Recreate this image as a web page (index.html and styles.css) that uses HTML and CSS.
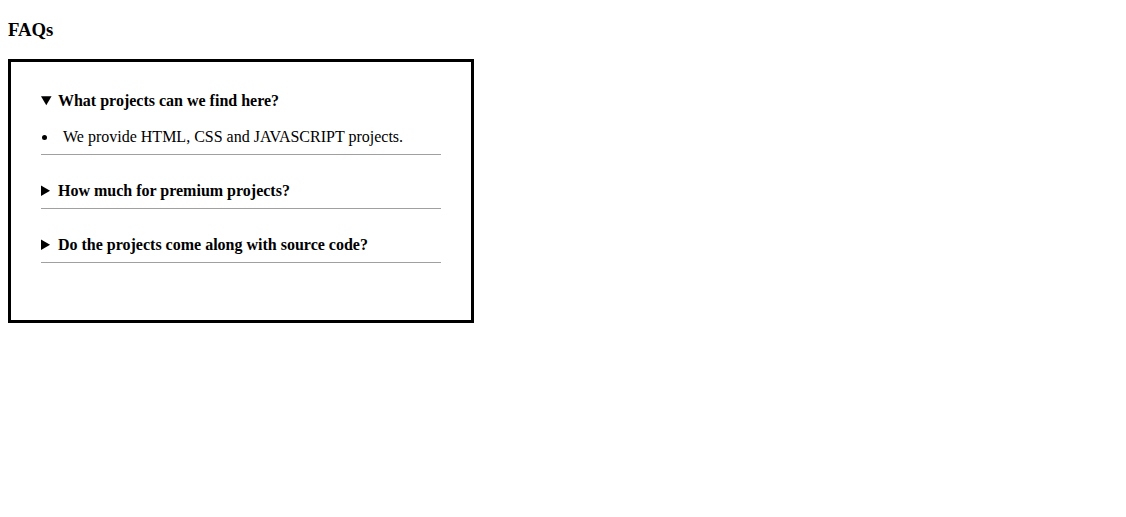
FILE: index.html
```html
<!DOCTYPE html>
<html lang="en">
<head>
<meta charset="utf-8">
<title>FAQs</title>
<link rel="stylesheet" href="styles.css">
</head>
<body>
<h3 class="title">FAQs</h3>
<div class="faq">
  <details class="item" open>
    <summary class="question">What projects can we find here?</summary>
    <ul class="answer">
      <li>We provide HTML, CSS and JAVASCRIPT projects.</li>
    </ul>
  </details>
  <details class="item">
    <summary class="question">How much for premium projects?</summary>
    <ul class="answer">
      <li>Premium projects are priced individually.</li>
    </ul>
  </details>
  <details class="item">
    <summary class="question">Do the projects come along with source code?</summary>
    <ul class="answer">
      <li>Yes, every project includes its full source code.</li>
    </ul>
  </details>
</div>
</body>
</html>
```
FILE: styles.css
```css
body {
  margin: 0;
  padding: 0 8px 8px;
  font-family: "Liberation Serif", "Times New Roman", serif;
  font-size: 16px;
  color: #000;
  background: #fff;
}

.title {
  font-size: 18.72px;
  font-weight: bold;
  margin: 18.72px 0;
}

.faq {
  width: 400px;
  border: 3px solid #000;
  padding: 30px 30px 30px;
}

.item {
  border-bottom: 1px solid #a0a0a0;
  padding-bottom: 8px;
  margin-bottom: 27px;
}

.question {
  font-weight: bold;
  cursor: pointer;
}

.answer {
  margin: 17.6px 0 0;
  padding-left: 17px;
}

.answer li {
  padding-left: 5px;
}
```
